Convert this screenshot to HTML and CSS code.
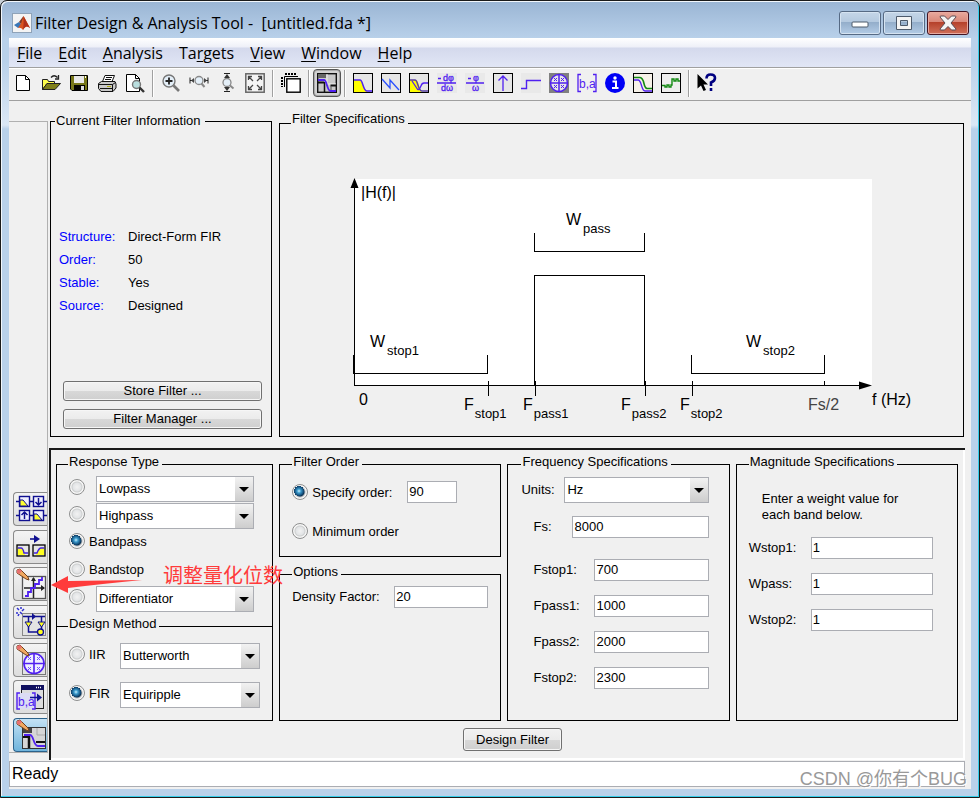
FILE: index.html
```html
<!DOCTYPE html>
<html lang="en">
<head>
    <meta charset="UTF-8">
    <meta name="viewport" content="width=device-width, initial-scale=1.0">
    <title>Filter Design &amp; Analysis Tool</title>
    <link rel="stylesheet" href="styles.css">
</head>
<body>
    <div class="window">
        <header class="titlebar">
            <svg class="app-icon" width="20" height="20" viewBox="0 0 20 20">
                <rect x="0.5" y="0.5" width="19" height="19" fill="#f4f4f4" stroke="#8fa3b8"/>
                <path d="M2 12 L7 9 L10 12 L6 15 Z" fill="#3a78b8"/>
                <path d="M7 9 Q10 5 11.500 3 L10 12 Z" fill="#7a3a2a"/>
                <path d="M11.500 3 Q14 7 18 15 Q14 11 11 17 Q9 14 6 15 Q10 10 11.500 3 Z" fill="#d9531e"/>
                <path d="M11.500 3 Q12 9 11 17 Q14 11 18 15 Q14 8 11.500 3 Z" fill="#b0301a"/>
            </svg>
            <h1>Filter Design &amp; Analysis Tool -&nbsp; [untitled.fda *]</h1>
            <div class="window-buttons">
                <button type="button" aria-label="Minimize">
                    <svg width="20" height="16" viewBox="0 0 20 16"><rect x="2" y="7" width="16" height="5" rx="1" fill="#fff" stroke="#4d5a6b"/></svg>
                </button>
                <button type="button" aria-label="Maximize">
                    <svg width="20" height="16" viewBox="0 0 20 16"><path d="M2.500 1.500 H17.500 V14.500 H2.500 Z M6.500 5.500 V10.500 H13.500 V5.500 Z" fill="#f4f4f4" fill-rule="evenodd" stroke="#4d5a6b"/></svg>
                </button>
                <button type="button" class="close" aria-label="Close">
                    <svg width="20" height="16" viewBox="0 0 20 16"><path d="M2 2 Q2 1 3 1 H6.500 L10 4.500 L13.500 1 H17 Q18 1 18 2 L13 8 L18 14 Q18 15 17 15 H13.500 L10 11.500 L6.500 15 H3 Q2 15 2 14 L7 8 Z" fill="#f4f4f4" stroke="#5b4a52"/></svg>
                </button>
            </div>
        </header>

        <div class="client">
            <nav class="menubar">
                <a href="#"><u>F</u>ile</a>
                <a href="#"><u>E</u>dit</a>
                <a href="#"><u>A</u>nalysis</a>
                <a href="#">Ta<u>r</u>gets</a>
                <a href="#"><u>V</u>iew</a>
                <a href="#"><u>W</u>indow</a>
                <a href="#"><u>H</u>elp</a>
            </nav>

            <div class="toolbar">
                <button type="button" aria-label="New">
                    <svg viewBox="0 0 20 20"><path d="M3.500 2.500 H12.500 L16.500 6.500 V17.500 H3.500 Z" fill="#fff" stroke="#000"/><path d="M12.500 2.500 V6.500 H16.500" fill="none" stroke="#000"/></svg>
                </button>
                <button type="button" aria-label="Open">
                    <svg viewBox="0 0 20 20"><path d="M1.500 16.500 V6.500 H6.500 L7.500 8.500 H13.500 V10.500 H6 Z" fill="#ffff4d" stroke="#222"/><path d="M1.500 16.500 L6 10.500 H19.500 L14 16.500 Z" fill="#80801a" stroke="#222"/><path d="M10 4.500 Q13 1 16.500 4.500 M17.500 2 V6 H14" fill="none" stroke="#222" stroke-width="1.300"/></svg>
                </button>
                <button type="button" aria-label="Save">
                    <svg viewBox="0 0 20 20"><path d="M1.500 2.500 H18.500 V17.500 H3 L1.500 16 Z" fill="#77771a" stroke="#000"/><rect x="5" y="3" width="10" height="7" fill="#e8e8e8"/><rect x="5" y="12" width="11" height="6" fill="#000"/><rect x="12" y="13" width="3" height="4" fill="#ddd"/><rect x="16" y="3" width="1" height="2" fill="#fff"/></svg>
                </button>
                <button type="button" aria-label="Print">
                    <svg viewBox="0 0 20 20"><path d="M5.500 8.500 L8 2.500 H17.500 L15 8.500 Z" fill="#fff" stroke="#111"/><path d="M9 4.500 H15 M8 6.500 H14" stroke="#111"/><path d="M1.500 10.500 L4.500 8.500 H18 L19 11 V15 L16 18.500 H4 L1.500 15.500 Z" fill="#c9c9c9" stroke="#111"/><path d="M2 11.500 H15.500 L18.500 9.500 M15.500 11.500 V18 M3 15.500 H15" fill="none" stroke="#111"/><rect x="10" y="13" width="4" height="1" fill="#aaaa10"/></svg>
                </button>
                <button type="button" aria-label="Print Preview">
                    <svg viewBox="0 0 20 20"><path d="M1.500 1.500 H10.500 L14.500 5.500 V18.500 H1.500 Z" fill="#fff" stroke="#000"/><path d="M10.500 1.500 V5.500 H14.500" fill="none" stroke="#000"/><circle cx="11.500" cy="11.500" r="4" fill="#b9dede" stroke="#777" stroke-width="1.400"/><path d="M14.500 14.500 L19 19" stroke="#333" stroke-width="2.400"/></svg>
                </button>
                <span class="separator"></span>
                <button type="button" aria-label="Zoom In">
                    <svg viewBox="0 0 20 20"><circle cx="8" cy="8" r="6" fill="#e4eff8" stroke="#777" stroke-width="1.400"/><path d="M8 4.500 V11.500 M4.500 8 H11.500" stroke="#222" stroke-width="1.800"/><path d="M12.500 12.500 L18 18" stroke="#777" stroke-width="2.600"/></svg>
                </button>
                <button type="button" aria-label="Zoom X-Axis">
                    <svg viewBox="0 0 20 20"><circle cx="10" cy="7.500" r="4" fill="#e4eff8" stroke="#888" stroke-width="1.300"/><path d="M12.500 10.500 L15.500 14" stroke="#888" stroke-width="2"/><path d="M1 4.500 V10.500 M19 4.500 V10.500 M1 7.500 H5 M19 7.500 H15" stroke="#222"/><path d="M2 7.500 L5 5 V10 Z M18 7.500 L15 5 V10 Z" fill="#444"/></svg>
                </button>
                <button type="button" aria-label="Zoom Y-Axis">
                    <svg viewBox="0 0 20 20"><circle cx="10" cy="9.500" r="4" fill="#e4eff8" stroke="#888" stroke-width="1.300"/><path d="M13 12.500 L16.500 15.500" stroke="#888" stroke-width="2"/><path d="M7 0.500 H13 M7 18.500 H13" stroke="#222"/><path d="M10 1 L13 5 H7 Z M10 18 L13 14 H7 Z" fill="#333"/></svg>
                </button>
                <button type="button" aria-label="Full View">
                    <svg viewBox="0 0 20 20"><rect x="0.800" y="0.800" width="18.400" height="18.400" fill="#f4f4f4" stroke="#666" stroke-width="1.500"/><path d="M3.500 7 V3.500 H7 M3.500 3.500 L8 8 M13 3.500 H16.500 V7 M16.500 3.500 L12 8 M3.500 13 V16.500 H7 M3.500 16.500 L8 12 M16.500 13 V16.500 H13 M16.500 16.500 L12 12" fill="none" stroke="#444" stroke-width="1.300"/></svg>
                </button>
                <span class="separator"></span>
                <button type="button" aria-label="Full View Analysis">
                    <svg viewBox="0 0 20 20"><path d="M1 4 V14 M4 1 H15" stroke="#000" stroke-width="2" stroke-dasharray="2 1"/><path d="M3.500 14 V3.500 H17" fill="none" stroke="#000"/><rect x="5.800" y="5.800" width="13.400" height="13.400" fill="#fff" stroke="#000" stroke-width="1.400"/></svg>
                </button>
                <span class="separator"></span>
                <button type="button" class="pressed" aria-label="Filter Specifications">
                    <svg viewBox="0 0 20 20"><rect x="0.700" y="0.700" width="18.600" height="18.600" fill="#c9c9c9" stroke="#111" stroke-width="1.400"/><rect x="1" y="1" width="8" height="4" fill="#666"/><path d="M10 1 V11 H19" fill="none" stroke="#eee"/><path d="M1 9.500 H7 M13.500 12.500 H19" stroke="#111" stroke-width="2"/><path d="M7.500 9 V19" stroke="#111" stroke-width="1.500"/><path d="M14 13 V19" stroke="#555"/><path d="M1 7 H7 C10 7 10 18 13.500 18 H19" fill="none" stroke="#5020f0" stroke-width="1.800"/></svg>
                </button>
                <span class="separator"></span>
                <button type="button" aria-label="Magnitude Response">
                    <svg viewBox="0 0 20 20"><rect x="0.500" y="0.500" width="19" height="19" fill="#e6e6e6" stroke="#000"/><path d="M1 7 H7 C10 7 10 18 14 18 V19 H1 Z" fill="#ff0"/><path d="M1 7 H7 C10 7 10 18 14 18 H19" fill="none" stroke="#5020f0" stroke-width="1.500"/></svg>
                </button>
                <button type="button" aria-label="Phase Response">
                    <svg viewBox="0 0 20 20"><rect x="0.500" y="0.500" width="19" height="19" fill="#e6e6e6" stroke="#000"/><path d="M1 6 L9 15 V7 L18 17" fill="none" stroke="#2a50ff" stroke-width="1.300"/></svg>
                </button>
                <button type="button" aria-label="Magnitude and Phase Responses">
                    <svg viewBox="0 0 20 20"><rect x="0.500" y="0.500" width="19" height="19" fill="#e6e6e6" stroke="#000"/><path d="M1 7 H7 C10 7 10 18 13 19 H1 Z" fill="#ff0"/><path d="M1 7 H6 C9 7 9 18 13 18 H19" fill="none" stroke="#5a40a0" stroke-width="1.500"/><path d="M3 8 L9 17 M9 17 C13 15 11 10 15 10 H19" fill="none" stroke="#5020f0" stroke-width="1.300"/></svg>
                </button>
                <button type="button" aria-label="Group Delay Response">
                    <svg viewBox="0 0 20 20"><rect width="20" height="20" fill="#e9e9e9"/><path d="M0 10 H19 M1 5.500 H4" stroke="#5020f0" stroke-width="1.400"/><text x="6" y="8" class="symbol">dφ</text><text x="4" y="18" class="symbol">dω</text></svg>
                </button>
                <button type="button" aria-label="Phase Delay">
                    <svg viewBox="0 0 20 20"><rect width="20" height="20" fill="#e9e9e9"/><path d="M1 10 H19 M3 5.500 H6" stroke="#5020f0" stroke-width="1.400"/><text x="8" y="8" class="symbol">φ</text><text x="7" y="18" class="symbol">ω</text></svg>
                </button>
                <button type="button" aria-label="Impulse Response">
                    <svg viewBox="0 0 20 20"><rect x="0.500" y="0.500" width="19" height="19" fill="#e6e6e6" stroke="#000"/><path d="M10 18 V3 M5.500 7.500 L10 3 L14.500 7.500" fill="none" stroke="#5020f0" stroke-width="1.300"/></svg>
                </button>
                <button type="button" aria-label="Step Response">
                    <svg viewBox="0 0 20 20"><rect width="20" height="20" fill="#e9e9e9"/><path d="M0 15.500 H5.500 V7.500 H20" fill="none" stroke="#5020f0" stroke-width="1.400"/></svg>
                </button>
                <button type="button" aria-label="Pole-Zero Plot">
                    <svg viewBox="0 0 20 20"><rect width="20" height="20" fill="#808080"/><circle cx="10" cy="10" r="8.500" fill="#e6e6e6" stroke="#5020f0" stroke-width="1.500"/><path d="M10 1 V19 M1 10 H19" stroke="#5020f0" stroke-width="1.500"/><path d="M5 5 l3 3 m0 -3 l-3 3 M12 5 l3 3 m0 -3 l-3 3 M5 12 l3 3 m0 -3 l-3 3 M12 12 l3 3 m0 -3 l-3 3" stroke="#5020f0"/></svg>
                </button>
                <button type="button" aria-label="Filter Coefficients">
                    <svg viewBox="0 0 20 20"><path d="M4 1.500 H1 V18.500 H4 M16 1.500 H19 V18.500 H16" fill="none" stroke="#5020f0" stroke-width="1.300"/><text x="2" y="15" class="coef">b,a</text></svg>
                </button>
                <button type="button" aria-label="Filter Information">
                    <svg viewBox="0 0 20 20"><circle cx="10" cy="10" r="10" fill="#0000f5"/><circle cx="10" cy="5" r="1.700" fill="#fff"/><path d="M7.500 8.500 H11 V14.500 M7 15 H13.500" fill="none" stroke="#fff" stroke-width="2"/></svg>
                </button>
                <button type="button" aria-label="Magnitude Response Estimate">
                    <svg viewBox="0 0 20 20"><rect x="0.500" y="0.500" width="19" height="19" fill="#f6f1e8" stroke="#000"/><path d="M1 7 H5 C9 7 8 18 12 18 H19" fill="none" stroke="#5020f0" stroke-width="1.300"/><path d="M1 4.500 H7 C12 5 10 15 14 15.500 H19" fill="none" stroke="#128a12" stroke-width="1.600"/></svg>
                </button>
                <button type="button" aria-label="Round-off Noise Power Spectrum">
                    <svg viewBox="0 0 20 20"><rect x="0.500" y="0.500" width="19" height="19" fill="#eee" stroke="#000"/><path d="M1 12.500 H4 V14 H6 V12 H8 V14 H10 V12 H11 V6 H13 V8 H15 V6 H17 V8 H19" fill="none" stroke="#128a12" stroke-width="1.400"/></svg>
                </button>
                <span class="separator"></span>
                <button type="button" aria-label="What's This?">
                    <svg viewBox="0 0 20 20"><path d="M0.500 1 V15.500 L4 12.500 L6.500 18 L9 17 L6.500 11.500 H11 Z" fill="#000"/><path d="M9.500 5.500 Q9.500 1.500 13.500 1.500 Q18 1.500 18 5 Q18 8 14 9.500 V13 M14 15 V18" fill="none" stroke="#000080" stroke-width="2.600"/></svg>
                </button>
            </div>

            <div class="workspace">
                <aside class="rail">
                    <div class="rail-tools">
                        <button type="button" aria-label="Create a Multirate Filter">
                            <svg viewBox="0 0 32 32"><path d="M1 8.500 H32 M1 22.500 H32" stroke="#101090" stroke-width="1.300"/><g fill="#f0f0ff" stroke="#101090" stroke-width="1.400"><rect x="4.500" y="3.500" width="10" height="10"/><rect x="18.500" y="3.500" width="10" height="10"/><rect x="4.500" y="17.500" width="10" height="10"/><rect x="18.500" y="17.500" width="10" height="10"/></g><path d="M5 7 H8 L13 13 H5 Z M19 21 H22 L27 27 H19 Z" fill="#ffff30" stroke="#101090"/><path d="M23.500 5 V12 M20.500 9 L23.500 12 L26.500 9 M9.500 26 V19 M6.500 22 L9.500 19 L12.500 22" fill="none" stroke="#101090" stroke-width="1.500"/></svg>
                        </button>
                        <button type="button" aria-label="Transform Filter">
                            <svg viewBox="0 0 32 32"><path d="M15 8 H21" stroke="#101090" stroke-width="1.600"/><path d="M19 4 L25 8 L19 12 Z" fill="#101090"/><g fill="#e6e6e6" stroke="#000" stroke-width="1.300"><rect x="2" y="14" width="12" height="11"/><rect x="18" y="14" width="12" height="11"/></g><path d="M3 17 H6 Q9 17 10 24 H3 Z M29 17 H26 Q23 17 21 24 H29 Z" fill="#ffff20"/><path d="M3 17 H6 Q8 17 9 22 H13 M29 17 H26 Q24 17 22 22 H19" fill="none" stroke="#4020e0" stroke-width="1.400"/></svg>
                        </button>
                        <button type="button" aria-label="Set Quantization Parameters">
                            <svg viewBox="0 0 32 32"><rect x="7.500" y="8.500" width="23" height="22" fill="#f2f2f2" stroke="#555" stroke-width="1.300"/><path d="M9 20 H29 M18.500 10 V30" stroke="#222" stroke-width="1.500"/><path d="M16 13 L18.500 9 L21 13 Z M26 17 L30 20 L26 23 Z" fill="#222"/><path d="M10 28 H13 V24 H16 V20 H20 V16 H24 V12 H27 V9" fill="none" stroke="#5020f0" stroke-width="1.800"/><path d="M2 2 L5 1 L13 9 L14 12 L11 11 L2 5 Z" fill="#f0a860" stroke="#70401c"/><path d="M2 2 L5 1 L7 3 L4 6 L2 5 Z" fill="#e87070"/></svg>
                        </button>
                        <button type="button" aria-label="Realize Model">
                            <svg viewBox="0 0 32 32"><rect x="7.500" y="7.500" width="23" height="22" fill="#e3e3e3" stroke="#888"/><path d="M2 2 l2 2 M6 1 v2 M1 7 h2 M9 3 l-2 2 M5 6 l2 2 M3 10 l1 -2" stroke="#3030d0" stroke-width="1.500"/><path d="M8 10.500 H30 M13.500 10 V26 H24 M26.500 10 V26" fill="none" stroke="#101090" stroke-width="1.500"/><path d="M17 7 L21 10.500 L17 14 Z" fill="#101090"/><path d="M10 16 H17 L13.500 21 Z M23 16 H30 L26.500 21 Z" fill="#ffff20" stroke="#101090"/><circle cx="25.500" cy="26" r="3" fill="#ffff20" stroke="#101090" stroke-width="1.300"/></svg>
                        </button>
                        <button type="button" aria-label="Pole-Zero Editor">
                            <svg viewBox="0 0 32 32"><rect x="7.500" y="8.500" width="23" height="22" fill="#e3e3e3" stroke="#777"/><circle cx="19" cy="19.500" r="10" fill="#efefff" stroke="#5020f0" stroke-width="1.600"/><path d="M19 9 V30 M8 19.500 H30" stroke="#5020f0" stroke-width="1.600"/><path d="M13 13 l3 3 m0 -3 l-3 3 M22 13 l3 3 m0 -3 l-3 3 M13 23 l3 3 m0 -3 l-3 3 M22 23 l3 3 m0 -3 l-3 3" stroke="#7050ff"/><path d="M2 2 L5 1 L13 9 L14 12 L11 11 L2 5 Z" fill="#f0a860" stroke="#70401c"/><path d="M2 2 L5 1 L7 3 L4 6 L2 5 Z" fill="#e87070"/></svg>
                        </button>
                        <button type="button" aria-label="Import Filter">
                            <svg viewBox="0 0 32 32"><rect x="6.500" y="4.500" width="22" height="23" fill="#ddd" stroke="#222"/><rect x="6" y="4" width="23" height="5" fill="#101060"/><path d="M21 6.500 h1 m1 0 h1 m1 0 h1" stroke="#fff" stroke-width="1.300"/><rect x="2" y="12" width="18" height="16" fill="#dcdcf4"/><path d="M5 12 H2 V28 H5 M17 12 H20 V28 H17" fill="none" stroke="#5020f0" stroke-width="1.400"/><text x="3" y="25" class="coef">b,a</text><path d="M15 16.500 H24" stroke="#101090" stroke-width="1.500"/><path d="M22 12.500 L27 16.500 L22 20.500 Z" fill="#101090"/></svg>
                        </button>
                        <button type="button" class="active" aria-label="Design Filter Panel">
                            <svg viewBox="0 0 32 32"><rect x="7.500" y="8.500" width="23" height="21" fill="#d6d6d6" stroke="#333"/><rect x="8" y="9" width="9" height="5" fill="#444"/><path d="M8 18 H14 M21 23 H30" stroke="#111" stroke-width="2"/><path d="M14 17 V29" stroke="#111" stroke-width="2.500"/><path d="M22 9 V16 H30" fill="none" stroke="#aaa"/><path d="M9 16 H15 C19 16 18 27 23 27 H30" fill="none" stroke="#5020f0" stroke-width="1.800"/><path d="M2 2 L5 1 L13 9 L14 12 L11 11 L2 5 Z" fill="#f0a860" stroke="#70401c"/><path d="M2 2 L5 1 L7 3 L4 6 L2 5 Z" fill="#e87070"/></svg>
                        </button>
                    </div>
                </aside>

                <main class="main">
                    <div class="top-row">
                        <fieldset class="info">
                            <legend>Current Filter Information</legend>
                            <dl>
                                <dt>Structure:</dt><dd>Direct-Form FIR</dd>
                                <dt>Order:</dt><dd>50</dd>
                                <dt>Stable:</dt><dd>Yes</dd>
                                <dt>Source:</dt><dd>Designed</dd>
                            </dl>
                            <div class="info-buttons">
                                <button type="button" class="btn">Store Filter ...</button>
                                <button type="button" class="btn">Filter Manager ...</button>
                            </div>
                        </fieldset>

                        <fieldset class="specs">
                            <legend>Filter Specifications</legend>
                            <svg class="plot" width="580" height="253" viewBox="344 172 580 253">
                                <rect x="354" y="179" width="518" height="206" fill="#fff"/>
                                <g fill="none" stroke="#000" shape-rendering="crispEdges">
                                    <path d="M354.500 185 V385.500 H865"/>
                                    <path d="M353.500 355 V373.500 H487.500 V355"/>
                                    <path d="M534.500 233 V251.500 H644.500 V233"/>
                                    <path d="M534.500 385 V275.500 H644.500 V385"/>
                                    <path d="M691.500 355 V373.500 H824.500 V355"/>
                                    <path d="M488.500 381 V396 M535.500 381 V396 M645.500 381 V396 M692.500 381 V396 M824.500 381 V385"/>
                                </g>
                                <path d="M354.500 178 L358.500 188 H350.500 Z M872 385.500 L859 389.500 V381.500 Z" fill="#000"/>
                                <text x="361" y="198">|H(f)|</text>
                                <text x="566" y="225">W<tspan class="sub" dx="2" dy="8">pass</tspan></text>
                                <text x="370" y="347">W<tspan class="sub" dx="2" dy="8">stop1</tspan></text>
                                <text x="746" y="347">W<tspan class="sub" dx="2" dy="8">stop2</tspan></text>
                                <text x="359" y="405">0</text>
                                <text x="464" y="410">F<tspan class="sub" dx="1" dy="8">stop1</tspan></text>
                                <text x="523" y="410">F<tspan class="sub" dx="1" dy="8">pass1</tspan></text>
                                <text x="621" y="410">F<tspan class="sub" dx="1" dy="8">pass2</tspan></text>
                                <text x="680" y="410">F<tspan class="sub" dx="1" dy="8">stop2</tspan></text>
                                <text x="808" y="410" fill="#444">Fs/2</text>
                                <text x="872" y="405">f (Hz)</text>
                            </svg>
                        </fieldset>
                    </div>

                    <section class="design">
                        <div class="groups">
                            <div class="stack">
                                <fieldset class="response">
                                    <legend>Response Type</legend>
                                    <div class="choice">
                                        <input type="radio" name="response" aria-label="Lowpass type">
                                        <span class="combo"><select aria-label="Lowpass"><option>Lowpass</option></select></span>
                                    </div>
                                    <div class="choice">
                                        <input type="radio" name="response" aria-label="Highpass type">
                                        <span class="combo"><select aria-label="Highpass"><option>Highpass</option></select></span>
                                    </div>
                                    <div class="choice">
                                        <input type="radio" name="response" id="bandpass" checked>
                                        <label for="bandpass">Bandpass</label>
                                    </div>
                                    <div class="choice">
                                        <input type="radio" name="response" id="bandstop">
                                        <label for="bandstop">Bandstop</label>
                                    </div>
                                    <div class="choice">
                                        <input type="radio" name="response" aria-label="Other type">
                                        <span class="combo"><select aria-label="Other"><option>Differentiator</option></select></span>
                                    </div>
                                </fieldset>
                                <fieldset class="method">
                                    <legend>Design Method</legend>
                                    <div class="choice">
                                        <input type="radio" name="method" id="iir">
                                        <label for="iir">IIR</label>
                                        <span class="combo"><select aria-label="IIR method"><option>Butterworth</option></select></span>
                                    </div>
                                    <div class="choice">
                                        <input type="radio" name="method" id="fir" checked>
                                        <label for="fir">FIR</label>
                                        <span class="combo"><select aria-label="FIR method"><option>Equiripple</option></select></span>
                                    </div>
                                </fieldset>
                            </div>

                            <div class="stack order-stack">
                                <fieldset class="order">
                                    <legend>Filter Order</legend>
                                    <div class="choice">
                                        <input type="radio" name="order" id="specify" checked>
                                        <label for="specify">Specify order:</label>
                                        <input type="text" value="90" aria-label="Order">
                                    </div>
                                    <div class="choice">
                                        <input type="radio" name="order" id="minimum">
                                        <label for="minimum">Minimum order</label>
                                    </div>
                                </fieldset>
                                <fieldset class="options">
                                    <legend>Options</legend>
                                    <div class="field">
                                        <label for="density">Density Factor:</label>
                                        <input type="text" id="density" value="20">
                                    </div>
                                </fieldset>
                            </div>

                            <fieldset class="frequency">
                                <legend>Frequency Specifications</legend>
                                <div class="field units">
                                    <label for="units">Units:</label>
                                    <span class="combo"><select id="units"><option>Hz</option></select></span>
                                </div>
                                <div class="field rate">
                                    <label for="fs">Fs:</label>
                                    <input type="text" id="fs" value="8000">
                                </div>
                                <div class="edges">
                                    <div class="field">
                                        <label for="fstop1">Fstop1:</label>
                                        <input type="text" id="fstop1" value="700">
                                    </div>
                                    <div class="field">
                                        <label for="fpass1">Fpass1:</label>
                                        <input type="text" id="fpass1" value="1000">
                                    </div>
                                    <div class="field">
                                        <label for="fpass2">Fpass2:</label>
                                        <input type="text" id="fpass2" value="2000">
                                    </div>
                                    <div class="field">
                                        <label for="fstop2">Fstop2:</label>
                                        <input type="text" id="fstop2" value="2300">
                                    </div>
                                </div>
                            </fieldset>

                            <fieldset class="magnitude">
                                <legend>Magnitude Specifications</legend>
                                <p>Enter a weight value for<br>each band below.</p>
                                <div class="field">
                                    <label for="wstop1">Wstop1:</label>
                                    <input type="text" id="wstop1" value="1">
                                </div>
                                <div class="field">
                                    <label for="wpass">Wpass:</label>
                                    <input type="text" id="wpass" value="1">
                                </div>
                                <div class="field">
                                    <label for="wstop2">Wstop2:</label>
                                    <input type="text" id="wstop2" value="1">
                                </div>
                            </fieldset>
                        </div>

                        <div class="actions">
                            <button type="button" class="btn">Design Filter</button>
                        </div>

                        <!-- note pointing at the quantization button -->
                        <div class="note">
                            <svg width="92" height="18" viewBox="0 0 92 18"><path d="M0 9 L17 0 V5 L91 4 Q50 8 17 12 V17 Z" fill="#ff3b3b"/></svg>
                            <span lang="zh">调整量化位数</span>
                        </div>
                    </section>
                </main>
            </div>

            <footer class="status">Ready</footer>
        </div>
        <div class="watermark" lang="zh">CSDN @你有个BUG</div>
    </div>
</body>
</html>
```

FILE: styles.css
```css
* {
    box-sizing: border-box;
}
body {
    margin: 0;
    background: #c8d0d8;
    font-family: "Liberation Sans", Arial, sans-serif;
    font-size: 13px;
    line-height: 16px;
    color: #000;
}
.window {
    position: relative;
    display: flex;
    flex-direction: column;
    min-height: 100vh;
    padding: 0 8px 8px;
    border: 1px solid #1a1a1a;
    border-radius: 7px 7px 0 0;
    background: linear-gradient(#9ab5d4 0, #b9d1ea 38px, #b9d1ea 60px, #dbe7f5 124px, #b9d1ea 128px);
    box-shadow: inset -1px -1px 0 #35cdea, inset 1px 1px 0 #f2f7fc;
}

/* title bar */
.titlebar {
    display: flex;
    align-items: center;
    height: 37px;
    padding: 7px 2px 0 3px;
}
.titlebar h1 {
    flex: 1;
    margin: 0 0 0 3px;
    font: 16px/22px "Open Sans", "Noto Sans", sans-serif;
}
.window-buttons {
    display: flex;
    gap: 2px;
}
.window-buttons button {
    display: flex;
    align-items: center;
    justify-content: center;
    width: 42px;
    height: 24px;
    padding: 0;
    border: 1px solid #566a84;
    border-radius: 3px;
    background: linear-gradient(#c5d6e8 0, #b4c9df 45%, #93adca 46%, #b3cce6 100%);
    box-shadow: inset 0 0 0 1px #d5e3f1;
}
.window-buttons .close {
    border-color: #431422;
    background: linear-gradient(#e9a99e 0, #d98778 45%, #b5402a 46%, #d0705a 100%);
    box-shadow: inset 0 0 0 1px #e8aaa0;
}

/* client area */
.client {
    flex: 1;
    display: flex;
    flex-direction: column;
    padding-bottom: 2px;
    background: #f0f0f0;
}
.menubar {
    display: flex;
    gap: 16px;
    height: 30px;
    padding-left: 8px;
    border-bottom: 1px solid #a0a0a0;
    background: linear-gradient(#fff 0, #eef0f8 9px, #d4d9ec 10px, #e1e6f6 100%);
    font: 16px/30px "Open Sans", "Noto Sans", sans-serif;
}
.menubar a {
    color: #000;
    text-decoration: none;
}
.menubar u {
    text-underline-offset: 2px;
}
.toolbar {
    display: flex;
    align-items: center;
    height: 33px;
    padding-bottom: 3px;
    border-top: 1px solid #fff;
    border-bottom: 1px solid #9f9f9f;
}
.toolbar button {
    display: flex;
    align-items: center;
    justify-content: center;
    width: 28px;
    height: 28px;
    padding: 0;
    border: 0;
    background: none;
}
.toolbar svg {
    width: 20px;
    height: 20px;
    overflow: visible;
}
.toolbar .pressed {
    border: 1px solid #555;
    border-radius: 4px;
    background: #d2d2d2;
    box-shadow: inset 0 0 0 1px #aaa;
}
.separator {
    width: 2px;
    height: 27px;
    margin: 0 3px;
    border-left: 1px solid #a0a0a0;
    border-right: 1px solid #fff;
}
.symbol {
    font: 9px "Liberation Sans", sans-serif;
    fill: #5020f0;
    stroke: #5020f0;
    stroke-width: 0.3;
}
.coef {
    font: 12px "Liberation Sans", sans-serif;
    fill: #5020f0;
}

.workspace {
    flex: 1;
    display: flex;
}
.rail {
    display: flex;
    flex-direction: column;
    justify-content: flex-end;
    width: 39px;
    margin: 20px 1px 7px 0;
    border: solid #b0b0b0;
    border-width: 1px 1px 1px 0;
}
.rail-tools {
    display: flex;
    flex-direction: column;
    justify-content: space-between;
    height: 260px;
    padding-left: 4px;
}
.rail button {
    height: 34px;
    padding: 0 0 0 1px;
    border: 1px solid #8a8a8a;
    border-right: 0;
    border-radius: 4px 0 0 4px;
    background: linear-gradient(#f4f4f4, #ddd);
}
.rail button svg {
    display: block;
    width: 32px;
    height: 32px;
}
.rail .active {
    border-color: #2c628b;
    background: linear-gradient(#c4e2f4, #6fb4dc);
}

/* group boxes */
fieldset {
    min-width: 0;
    margin: 0;
    padding: 0;
    border: 1px solid #000;
}
legend {
    margin-left: 11px;
    padding: 0 3px 0 1px;
    line-height: 14px;
}
.main {
    flex: 1;
    display: flex;
    flex-direction: column;
    min-width: 0;
    padding: 11px 6px 0 0;
}
.top-row {
    display: grid;
    grid-template-columns: 222px 1fr;
    gap: 7px;
    height: 325px;
    padding: 0 1px;
}
.info {
    display: flex;
    flex-direction: column;
    justify-content: space-between;
    margin-top: 2px;
    padding-bottom: 7px;
}
.info legend {
    margin-left: 4px;
    padding-right: 4px;
}
.info dl {
    display: grid;
    grid-template-columns: 69px 1fr;
    grid-auto-rows: 23px;
    align-items: center;
    margin: 0;
    padding: 97px 0 0 8px;
}
.info dt {
    color: #00f;
}
.info dd {
    margin: 0;
}
.info-buttons {
    display: flex;
    flex-direction: column;
    gap: 8px;
    padding: 0 9px 0 12px;
}
.btn {
    height: 20px;
    padding: 0 12px;
    border: 1px solid #707070;
    border-radius: 3px;
    background: linear-gradient(#f2f2f2 0, #ebebeb 50%, #d8d8d8 51%, #cfcfcf 100%);
    box-shadow: inset 0 0 0 1px #f6f6f6;
    font: 13px/16px "Liberation Sans", Arial, sans-serif;
}
.specs legend {
    padding-bottom: 8px;
}
.plot {
    display: block;
    margin: 38px 0 0 64px;
    font-size: 16px;
}
.plot .sub {
    font-size: 13px;
}

/* design panel */
.design {
    position: relative;
    flex: 1;
    margin-top: 11px;
    padding: 5px 7px 8px 5px;
    border: solid #1a1a1a;
    border-width: 2px 0 0 2px;
    box-shadow: inset -2px -2px 0 #fff;
}
.design legend {
    margin-left: 0;
    padding-bottom: 4px;
}
.groups {
    display: grid;
    grid-template-columns: minmax(0, 217fr) repeat(3, minmax(0, 222fr));
    gap: 6px;
    height: 266px;
}
.stack {
    display: flex;
    flex-direction: column;
    min-width: 0;
}
.response {
    display: grid;
    grid-template-rows: 26px 26px 27px 27px 26px;
    gap: 1px;
    height: 171px;
    padding: 3px 18px 0 12px;
    border-bottom: 0;
}
.design .response legend,
.design .method legend {
    margin-left: -1px;
}
.method {
    flex: 1;
    display: flex;
    flex-direction: column;
    gap: 13px;
    margin-top: -9px;
    padding: 8px 12px 0;
}
.choice {
    display: flex;
    align-items: flex-start;
}
.choice label {
    margin: 4px 0 0 4px;
}
.response .combo {
    flex: 1;
    margin-left: 11px;
}
.method label {
    width: 31px;
}
.method .combo {
    flex: 1;
}
.order-stack {
    gap: 8px;
}
.order {
    display: flex;
    flex-direction: column;
    gap: 17px;
    height: 102px;
    padding: 8px 12px 0;
}
.order label {
    width: 95px;
}
.order input[type=text] {
    width: 50px;
}
.options {
    flex: 1;
    padding: 3px 12px 0;
}
.field {
    display: flex;
    align-items: center;
}
.field input,
.field .combo {
    flex: 1;
    min-width: 0;
}
.options .field label {
    width: 102px;
}
.frequency {
    padding: 4px 20px 0 13px;
}
.units label {
    width: 43px;
}
.rate {
    margin: 13px 0 21px;
    padding-left: 12px;
}
.rate label {
    width: 39px;
}
.edges {
    display: flex;
    flex-direction: column;
    gap: 14px;
    padding-left: 12px;
}
.edges label {
    width: 61px;
}
.magnitude {
    display: flex;
    flex-direction: column;
    gap: 14px;
    padding: 18px 24px 0 12px;
}
.magnitude p {
    margin: 0 0 0 13px;
}
.magnitude label {
    width: 62px;
}
.actions {
    display: flex;
    justify-content: center;
    padding: 7px 0 0 11px;
}
.actions .btn {
    height: 23px;
}

/* form controls */
input[type=text] {
    height: 22px;
    padding: 0 1px 2px;
    border: 1px solid #abadb3;
    background: #fff;
    font: 13px/16px "Liberation Sans", Arial, sans-serif;
}
input[type=radio] {
    appearance: none;
    width: 16px;
    height: 16px;
    margin: 3px 0 0;
    border: 1px solid #8e8f8f;
    border-radius: 50%;
    background: radial-gradient(circle, #f2f2f2 0, #e2e4e6 4px, #cccece 5px, #f6f6f6 6px);
}
input[type=radio]:checked {
    background: radial-gradient(circle at 6px 6px, #c8f0ff 0, #3a9acc 2px, #0c3c66 5px, transparent 5px), radial-gradient(circle, #0c3556 4px, #b8babd 5px, #f6f6f6 6px);
}
.combo {
    position: relative;
    display: block;
    height: 26px;
}
.combo select {
    appearance: none;
    width: 100%;
    height: 26px;
    padding: 0 20px 0 2px;
    border: 1px solid #abadb3;
    border-radius: 0;
    background: linear-gradient(#f2f2f2, #cdcdcd) right / 18px 100% no-repeat #fff;
    font: 13px/16px "Liberation Sans", Arial, sans-serif;
    color: #000;
}
.combo::after {
    content: "";
    position: absolute;
    top: 11px;
    right: 5px;
    border: solid transparent;
    border-width: 5px 5px 0;
    border-top-color: #000;
}

.note {
    position: absolute;
    top: 113px;
    left: 0;
    display: flex;
    align-items: flex-start;
    gap: 20px;
    color: #ff3b3b;
    font: 20px/24px "Noto Sans CJK SC", sans-serif;
}
.note svg {
    margin-top: 13px;
}
.status {
    height: 26px;
    margin: 1px 6px 0 0;
    padding-left: 2px;
    border: 1px solid #abadb3;
    background: #fff;
    font-size: 16px;
    line-height: 24px;
}
.watermark {
    position: absolute;
    right: 12px;
    bottom: 5px;
    color: #999;
    font: 18px/26px "Liberation Sans", "Noto Sans CJK SC", sans-serif;
    text-shadow: 1px 1px 0 #fff;
}
```
